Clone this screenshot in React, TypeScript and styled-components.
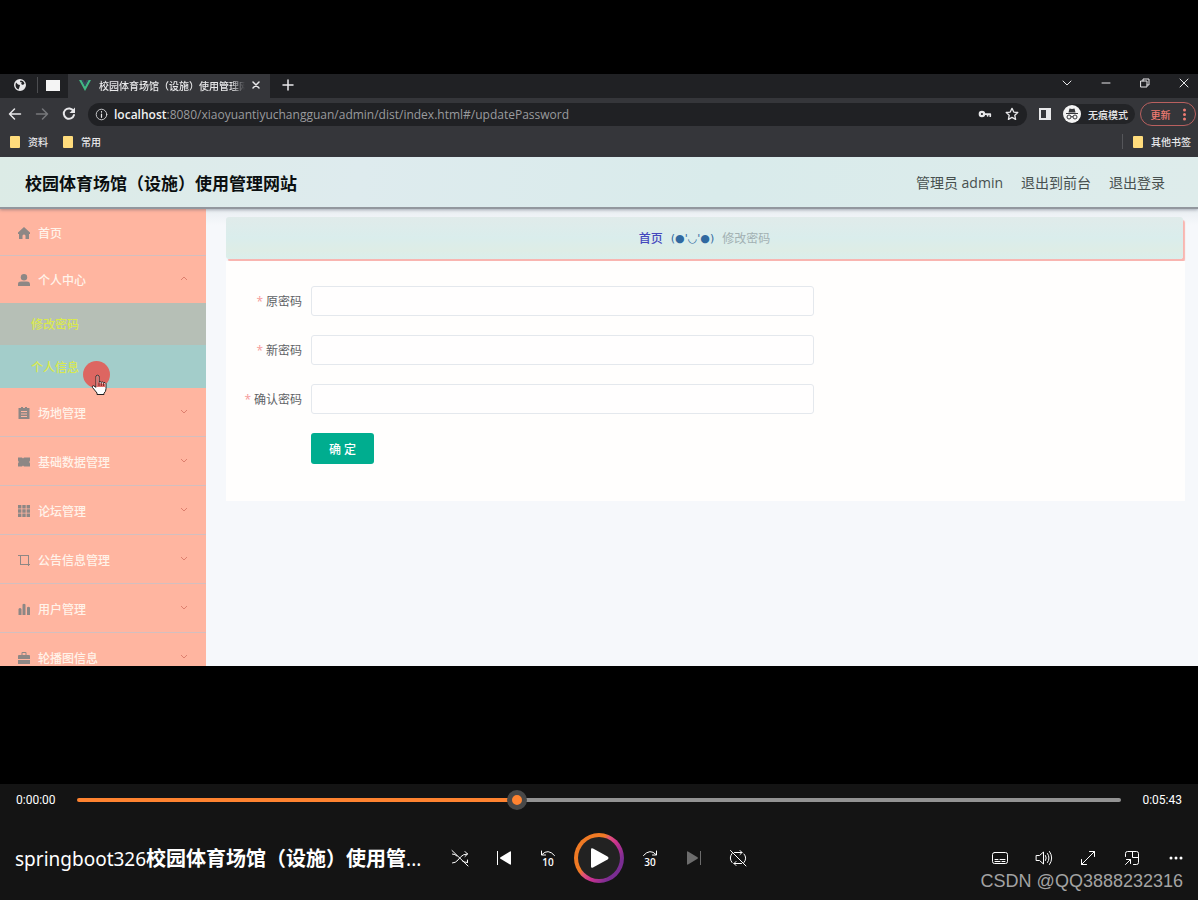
import React, { useState } from "react";
import styled, { createGlobalStyle, css } from "styled-components";

const GlobalStyle = createGlobalStyle`
  *, *::before, *::after { box-sizing: border-box; }
  body { margin: 0; background: #000; }
  button, input { font: inherit; }
  ul { margin: 0; padding: 0; list-style: none; }
`;

const uiFont = `"Open Sans", "Noto Sans CJK SC", sans-serif`;

const Page = styled.div`
  position: relative;
  display: flex;
  flex-direction: column;
  height: 100vh;
  background: #000;
  font-family: ${uiFont};
`;

const plainButton = css`
  display: flex;
  align-items: center;
  justify-content: center;
  padding: 0;
  border: 0;
  background: none;
  color: inherit;
`;

/* ---------- recorded browser window ---------- */

const Video = styled.section`
  display: flex;
  flex-direction: column;
  flex: 1;
  min-height: 0;
  margin: 74px 0 118px;
  overflow: hidden;
  background: #f6f9fb;
`;

const TabStrip = styled.div`
  display: flex;
  align-items: stretch;
  height: 24px;
  flex: none;
  background: #202124;
  color: #e8e8ea;
`;

const PinnedTabs = styled.div`
  display: flex;
  align-items: center;
  width: 68px;
  padding: 0 8px 2px 14px;
`;

const PinDivider = styled.span`
  width: 1px;
  height: 16px;
  margin: 0 8px 0 11px;
  background: #4c4d50;
`;

const WhiteTile = styled.span`
  width: 14px;
  height: 11px;
  background: #f4f4f4;
`;

const Tab = styled.div`
  display: flex;
  align-items: center;
  width: 202px;
  padding: 0 9px 2px 11px;
  background: #35363a;
  font-size: 10px;
  font-weight: 500;
`;

const TabTitle = styled.span`
  flex: 1;
  margin: 0 6px 0 8px;
  overflow: hidden;
  white-space: nowrap;
  mask-image: linear-gradient(90deg, #000 90%, transparent);
`;

const IconButton = styled.button<{ $w?: number }>`
  ${plainButton}
  width: ${(p) => p.$w ?? 16}px;
  height: 16px;
`;

const NewTab = styled(IconButton)`
  margin: 3px 0 0 10px;
`;

const WindowButtons = styled.div`
  display: flex;
  align-items: center;
  gap: 23px;
  height: 18px;
  margin-left: auto;
  padding-right: 6px;
`;

const Toolbar = styled.div`
  display: flex;
  align-items: center;
  height: 32px;
  flex: none;
  padding: 0 2px 0 7px;
  background: #35363a;
  color: #e8e8ea;
`;

const NavButtons = styled.div`
  display: flex;
  gap: 11px;
  margin-right: 11px;
`;

const AddressBar = styled.div`
  display: flex;
  align-items: center;
  flex: 1;
  height: 23px;
  padding: 0 7px;
  border-radius: 12px;
  background: #202124;
`;

const Address = styled.span`
  flex: 1;
  margin-left: 6px;
  color: #9a9b9e;
  font-size: 12px;
  white-space: nowrap;
  strong { color: #f1f1f1; font-weight: 600; }
`;

const AddressActions = styled.div`
  display: flex;
  gap: 11px;
`;

const SidePanelButton = styled(IconButton)`
  margin-left: 10px;
`;

const Incognito = styled.div`
  display: flex;
  align-items: center;
  gap: 7px;
  height: 20px;
  margin: 0 5px 0 10px;
  padding-right: 7px;
  border-radius: 10px;
  background: #232427;
  font-size: 10px;
  font-weight: 500;
`;

const UpdateButton = styled.button`
  ${plainButton}
  gap: 12px;
  width: 56px;
  height: 24px;
  border: 1px solid #b9605f;
  border-radius: 12px;
  color: #f07b72;
  font-size: 10px;
  font-weight: 500;
`;

const Bookmarks = styled.nav`
  display: flex;
  align-items: center;
  gap: 15px;
  height: 27px;
  flex: none;
  padding: 0 7px 4px 10px;
  background: #35363a;
`;

const Bookmark = styled.a<{ $last?: boolean }>`
  display: flex;
  align-items: center;
  gap: 8px;
  color: #e8e8ea;
  font-size: 10px;
  font-weight: 500;
  text-decoration: none;
  ${(p) => p.$last && css`
    margin-left: auto;
    padding-left: 10px;
    border-left: 1px solid #55565a;
  `}
`;

const Folder = styled.span`
  width: 10px;
  height: 12px;
  border-radius: 1px;
  background: #ffdc7c;
`;

/* ---------- admin site ---------- */

const SiteHeader = styled.header`
  position: relative;
  z-index: 1;
  display: flex;
  align-items: center;
  justify-content: space-between;
  height: 52px;
  flex: none;
  padding: 0 33px 0 25px;
  border-bottom: 2px solid #92979e;
  background: linear-gradient(100deg, #dcebe6, #deebee 30%, #d9ebeb 60%, #deeceb);
  box-shadow: 0 1px 3px rgba(60, 70, 90, 0.4);
`;

const SiteTitle = styled.h1`
  margin: 0;
  color: #0b0f10;
  font-size: 17px;
  font-weight: 700;
`;

const SiteLinks = styled.nav`
  display: flex;
  gap: 18px;
  color: #47504f;
  font-size: 14px;
  a { color: inherit; text-decoration: none; }
`;

const SiteBody = styled.div`
  display: flex;
  flex: 1;
  min-height: 0;
`;

const Sidebar = styled.aside`
  position: relative;
  width: 206px;
  flex: none;
  overflow: hidden;
  background: #ffb5a0;
  font-size: 12px;
  font-weight: 500;
`;

const MenuRow = styled.li<{ $short?: boolean; $open?: boolean }>`
  display: flex;
  align-items: center;
  height: ${(p) => (p.$short ? 47 : 49)}px;
  padding: 2px 18px 0 18px;
  border-bottom: 1px solid ${(p) => (p.$open ? "transparent" : "#d3bfbf")};
  color: #8d8785;
`;

const MenuLink = styled.a`
  flex: 1;
  margin-left: 8px;
  color: #fff3ea;
  text-decoration: none;
`;

const SubRow = styled.li<{ $hover?: boolean }>`
  display: flex;
  align-items: center;
  height: ${(p) => (p.$hover ? 43 : 42)}px;
  padding-left: 31px;
  background: ${(p) => (p.$hover ? "#a3cdca" : "#b6bfb6")};
  a { color: #d9e94f; text-decoration: none; }
`;

const Pointer = styled.div`
  position: absolute;
  top: 152px;
  left: 83px;
  width: 27px;
  height: 36px;
`;

const Main = styled.main`
  flex: 1;
  min-width: 0;
  padding: 8px 13px 0 20px;
  background: linear-gradient(#e9eef2, #f6f8fb 16px);
`;

const Breadcrumb = styled.nav`
  display: flex;
  align-items: center;
  justify-content: center;
  gap: 8px;
  height: 42px;
  margin-right: 2px;
  border-radius: 3px;
  background: linear-gradient(#e0ebea, #daedec 50%, #deede6 80%, #daeeeb);
  box-shadow: 2px 3px 1px #f9b5b0;
  font-size: 12px;
  a { color: #4547bd; font-weight: 500; text-decoration: none; }
`;

const Face = styled.span`
  color: #3069a0;
  font-family: "DejaVu Sans", sans-serif;
  font-size: 11px;
`;

const Current = styled.span`
  color: #a2b0b2;
`;

const FormCard = styled.form`
  display: flex;
  flex-direction: column;
  gap: 19px;
  margin-top: 2px;
  padding: 25px 20px 37px 0;
  background: #fffefd;
`;

const Field = styled.div`
  display: flex;
  align-items: center;
`;

const Label = styled.label`
  width: 85px;
  flex: none;
  padding-right: 9px;
  color: #606266;
  font-size: 12px;
  text-align: right;
  white-space: nowrap;
  &::before { content: "*"; margin-right: 3px; color: #f59a9a; }
`;

const TextInput = styled.input`
  flex: 0 1 503px;
  min-width: 0;
  height: 30px;
  padding: 0 12px;
  border: 1px solid #e4e8ed;
  border-radius: 3px;
  background: #fffefe;
`;

const Submit = styled.button`
  ${plainButton}
  width: 63px;
  height: 31px;
  margin-left: 85px;
  border-radius: 3px;
  background: #00ad8f;
  color: #fff;
  font-size: 12px;
  font-weight: 500;
`;

/* ---------- player ---------- */

const Player = styled.footer`
  flex: none;
  background: #141414;
  color: #fff;
`;

const Timeline = styled.div`
  display: flex;
  align-items: center;
  height: 32px;
  padding: 0 16px;
  font-family: Roboto, sans-serif;
  font-size: 12px;
`;

const Time = styled.span<{ $end?: boolean }>`
  width: 61px;
  flex: none;
  text-align: ${(p) => (p.$end ? "right" : "left")};
`;

const Seek = styled.input`
  flex: 1;
  min-width: 0;
  height: 20px;
  margin: 0;
  appearance: none;
  background: none;
  &::-webkit-slider-runnable-track {
    height: 4px;
    border-radius: 2px;
    background: linear-gradient(90deg, #ff8330 var(--played), #939393 var(--played));
  }
  &::-webkit-slider-thumb {
    appearance: none;
    width: 20px;
    height: 20px;
    margin-top: -8px;
    border: 5px solid #484848;
    border-radius: 50%;
    background: #ff8330;
  }
`;

const Controls = styled.div`
  display: grid;
  grid-template-columns: minmax(0, 1fr) auto minmax(0, 1fr);
  align-items: center;
  height: 84px;
  padding: 0 4px;
`;

const MediaTitle = styled.h2`
  margin: 0;
  padding: 0 0 2px 11px;
  overflow: hidden;
  font-family: "Noto Sans", "Noto Sans CJK SC", sans-serif;
  font-size: 19px;
  font-weight: 400;
  white-space: nowrap;
  b { font-size: 20px; font-weight: 700; }
`;

const ButtonGroup = styled.div<{ $end?: boolean }>`
  display: flex;
  align-items: center;
  gap: 8px;
  justify-content: ${(p) => (p.$end ? "flex-end" : "center")};
`;

const ControlButton = styled.button<{ $dim?: boolean }>`
  ${plainButton}
  width: 36px;
  height: 36px;
  color: ${(p) => (p.$dim ? "#6c6c6c" : "#fff")};
`;

const SkipButton = styled(ControlButton)`
  flex-direction: column;
`;

const SkipLabel = styled.span`
  font-family: "Open Sans", sans-serif;
  font-size: 10px;
  font-weight: 600;
  line-height: 10px;
`;

const PlayButton = styled.button`
  ${plainButton}
  width: 50px;
  height: 50px;
  border: 4px solid transparent;
  border-radius: 50%;
  background:
    linear-gradient(#222, #222) padding-box,
    linear-gradient(125deg, #f07a24 38%, #e0527a 46%, #c9318f 58%, #7a2d92 78%) border-box;
`;

const Watermark = styled.div`
  position: absolute;
  right: 15px;
  bottom: 8px;
  color: #a3a3a3;
  font-family: "Liberation Sans", sans-serif;
  font-size: 18px;
  line-height: 22px;
`;

/* ---------- drawings ---------- */

type IconProps = { size?: number; box?: number; fill?: boolean; width?: number; children: React.ReactNode };

const Icon = ({ size = 16, box = 16, fill, width = 1, children }: IconProps) => (
  <svg
    width={size}
    height={size}
    viewBox={`0 0 ${box} ${box}`}
    fill={fill ? "currentColor" : "none"}
    stroke={fill ? "none" : "currentColor"}
    strokeWidth={width}
    strokeLinecap="round"
    strokeLinejoin="round"
    aria-hidden="true"
  >
    {children}
  </svg>
);

const Chevron = ({ up }: { up?: boolean }) => (
  <svg width="8" height="8" viewBox="0 0 8 8" fill="none" stroke="#dd7f6e" aria-hidden="true">
    <path d={up ? "M1 4l3-3 3 3" : "M1 1l3 3 3-3"} />
  </svg>
);

const SkipArc = ({ back }: { back?: boolean }) => (
  <svg width="16" height="7" viewBox="0 0 16 7" fill="none" stroke="currentColor" strokeLinecap="round" aria-hidden="true">
    {back ? <path d="M1.500 1v4h4M2 4.500Q8-2 14.500 5.500" /> : <path d="M14.500 1v4h-4M14 4.500Q8-2 1.500 5.500" />}
  </svg>
);

const menuIcons: Record<string, React.ReactNode> = {
  home: <path d="M6 0L0 5.500V7h1v5h3.500V8.500Q6 6.500 7.500 8.500V12H11V7h1V5.500z" />,
  user: (
    <>
      <circle cx="6" cy="3.200" r="3.200" />
      <path d="M0 12V9.800Q.2 7.500 3 7.500h6q2.800 0 3 2.300V12z" />
    </>
  ),
  list: <path fillRule="evenodd" d="M.5 1H3V0h2v1h2V0h2v1h2.500v11H.5zM3 4v1h6V4zm0 2.500v1h6v-1zM3 9v1h6V9z" />,
  ticket: <path d="M0 1.500h4l1 1 1-1h6v3Q10.500 6 12 7.500v3H6l-1-1-1 1H0v-3Q1.500 6 0 4.500z" />,
  grid: <path d="M0 0h3.400v3.400H0zM4.300 0h3.400v3.400H4.300zM8.600 0H12v3.400H8.600zM0 4.300h3.400v3.400H0zM4.300 4.300h3.400v3.400H4.300zM8.600 4.300H12v3.400H8.600zM0 8.600h3.400V12H0zM4.300 8.600h3.400V12H4.300zM8.600 8.600H12V12H8.600z" />,
  crop: <path d="M0 1h11v9h1v1h-1v1h-1v-1H2V2H0zm3 1v8h7V2z" fillRule="evenodd" />,
  bars: <path d="M.5 6Q2 4 3.500 6v6h-3zM4.500 1.500Q6 0 7.500 1.500V12h-3zM9 4.500Q10.300 3 12 4.500V12H9z" />,
  bag: <path fillRule="evenodd" d="M3.500 3V1q0-1 1-1h3q1 0 1 1v2H11q1 0 1 1v3H0V4q0-1 1-1zm1 0h3V1h-3zM0 8h12v4H0z" />,
};

const MenuIcon = ({ name }: { name: string }) => (
  <Icon size={12} box={12} fill>{menuIcons[name]}</Icon>
);

const menu = [
  ["list", "场地管理"],
  ["ticket", "基础数据管理"],
  ["grid", "论坛管理"],
  ["crop", "公告信息管理"],
  ["bars", "用户管理"],
  ["bag", "轮播图信息"],
];

const fields = [
  ["old", "原密码"],
  ["new", "新密码"],
  ["confirm", "确认密码"],
];

const BrowserChrome = () => (
  <>
    <TabStrip>
      <PinnedTabs>
        <Icon size={12} box={12} fill>
          <path fillRule="evenodd" d="M6 0a6 6 0 100 12A6 6 0 006 0zM2 3.500l2 2 2 .5-.5 2-1 2.500Q1.500 9 1.500 6zM6.500 1.500q3 0 4 3L9 6 7 5l1-1.500-2-.5z" />
        </Icon>
        <PinDivider />
        <WhiteTile />
      </PinnedTabs>
      <Tab>
        <svg width="12" height="11" viewBox="0 0 12 11" aria-hidden="true">
          <path d="M0 0h2.500L6 6.500 9.500 0H12L6 11z" fill="#41b883" />
          <path d="M2.500 0h2L6 3l1.500-3h2L6 6.500z" fill="#35495e" />
        </svg>
        <TabTitle>校园体育场馆（设施）使用管理网</TabTitle>
        <IconButton $w={10} aria-label="关闭标签页">
          <Icon size={8} box={8} width={1.5}><path d="M1 1l6 6M7 1L1 7" /></Icon>
        </IconButton>
      </Tab>
      <NewTab aria-label="新标签页">
        <Icon size={12} box={12}><path d="M6 1v10M1 6h10" strokeWidth="1.500" /></Icon>
      </NewTab>
      <WindowButtons>
        <IconButton aria-label="搜索标签页"><Icon size={10} box={10}><path d="M1 3l4 4 4-4" /></Icon></IconButton>
        <IconButton aria-label="最小化"><Icon size={10} box={10}><path d="M1 5h8" /></Icon></IconButton>
        <IconButton aria-label="还原">
          <Icon size={10} box={10}><path d="M1 3h6v6H1zM3 3V1h6v6H7" /></Icon>
        </IconButton>
        <IconButton aria-label="关闭"><Icon size={10} box={10}><path d="M1 1l8 8M9 1L1 9" /></Icon></IconButton>
      </WindowButtons>
    </TabStrip>
    <Toolbar>
      <NavButtons>
        <IconButton aria-label="后退"><Icon width={1.5}><path d="M13.500 8H2.500m5-5l-5 5 5 5" /></Icon></IconButton>
        <IconButton aria-label="前进">
          <Icon width={1.5}><path d="M2.500 8h11M8.500 3l5 5-5 5" stroke="#77787b" /></Icon>
        </IconButton>
        <IconButton aria-label="重新加载">
          <Icon width={2}><path d="M12.500 5A5.200 5.200 0 1013 9" /><path d="M14 1.500V7H8.500z" fill="currentColor" strokeWidth="0" /></Icon>
        </IconButton>
      </NavButtons>
      <AddressBar>
        <Icon size={13}><circle cx="8" cy="8" r="6.500" /><path d="M8 7.500v4M8 4.500v.5" strokeWidth="1.500" /></Icon>
        <Address><strong>localhost</strong>:8080/xiaoyuantiyuchangguan/admin/dist/index.html#/updatePassword</Address>
        <AddressActions>
          <IconButton aria-label="密码">
            <Icon size={14}><circle cx="4.500" cy="8" r="2.500" strokeWidth="2.500" /><path d="M7.500 8H14v2.500M11 8v2" strokeWidth="2" /></Icon>
          </IconButton>
          <IconButton aria-label="收藏">
            <Icon size={14} width={1.5}><path d="M8 1.500l2 4.300 4.600.5-3.400 3.200.9 4.700L8 11.900l-4.100 2.300.9-4.700L1.400 6.300 6 5.800z" /></Icon>
          </IconButton>
        </AddressActions>
      </AddressBar>
      <SidePanelButton aria-label="侧边栏">
        <Icon size={12} box={12} fill><path fillRule="evenodd" d="M0 0h12v12H0zM2 2v8h5V2z" /></Icon>
      </SidePanelButton>
      <Incognito>
        <svg width="18" height="18" viewBox="0 0 18 18" aria-hidden="true">
          <circle cx="9" cy="9" r="9" fill="#f5f5f5" />
          <path d="M5.500 7.500l1-4 2.500.5 2.500-.5 1 4zM3 8h12v1H3z" fill="#35363a" />
          <g fill="none" stroke="#35363a"><circle cx="6" cy="12" r="2" /><circle cx="12" cy="12" r="2" /><path d="M8 12q1-1 2 0" /></g>
        </svg>
        无痕模式
      </Incognito>
      <UpdateButton>
        更新
        <svg width="3" height="13" viewBox="0 0 3 13" fill="currentColor" aria-hidden="true">
          <circle cx="1.500" cy="2" r="1.500" /><circle cx="1.500" cy="6.500" r="1.500" /><circle cx="1.500" cy="11" r="1.500" />
        </svg>
      </UpdateButton>
    </Toolbar>
    <Bookmarks>
      <Bookmark href="#"><Folder />资料</Bookmark>
      <Bookmark href="#"><Folder />常用</Bookmark>
      <Bookmark href="#" $last><Folder />其他书签</Bookmark>
    </Bookmarks>
  </>
);

const AdminSite = () => (
  <>
    <SiteHeader>
      <SiteTitle>校园体育场馆（设施）使用管理网站</SiteTitle>
      <SiteLinks>
        <span>管理员 admin</span>
        <a href="#front">退出到前台</a>
        <a href="#logout">退出登录</a>
      </SiteLinks>
    </SiteHeader>
    <SiteBody>
      <Sidebar>
        <ul>
          <MenuRow $short><MenuIcon name="home" /><MenuLink href="#home">首页</MenuLink></MenuRow>
          <MenuRow $short $open>
            <MenuIcon name="user" /><MenuLink href="#me">个人中心</MenuLink><Chevron up />
          </MenuRow>
          <SubRow><a href="#password">修改密码</a></SubRow>
          <SubRow $hover><a href="#profile">个人信息</a></SubRow>
          {menu.map(([icon, text]) => (
            <MenuRow key={text}>
              <MenuIcon name={icon} /><MenuLink href="#menu">{text}</MenuLink><Chevron />
            </MenuRow>
          ))}
        </ul>
        <Pointer>
          <svg width="27" height="36" viewBox="0 0 27 36" aria-hidden="true">
            <circle cx="13.500" cy="13.500" r="13.500" fill="#dd6661" />
            <path
              d="M13 15q1.500-1.500 3 0v6q1-1 2.300.3 1.200-.9 2.200.4 1.800-.7 2.500 1v5q0 3-2 4.500v1.300h-7V32l-4.500-5.500q-.8-1.800 1-1.800l2.500 1.600z"
              fill="#fff"
              stroke="#222"
            />
            <path d="M13.500 15.500q1-1 2 0v6.500l7 1v3h-9z" fill="#e3716c" />
            <path d="M16 21v4M18.300 21.500V25M20.600 22v3" stroke="#7c2324" />
          </svg>
        </Pointer>
      </Sidebar>
      <Main>
        <Breadcrumb>
          <a href="#home">首页</a>
          <Face>(●'◡'●)</Face>
          <Current>修改密码</Current>
        </Breadcrumb>
        <FormCard onSubmit={(e) => e.preventDefault()}>
          {fields.map(([id, text]) => (
            <Field key={id}>
              <Label htmlFor={id}>{text}</Label>
              <TextInput id={id} type="password" />
            </Field>
          ))}
          <Submit type="submit">确 定</Submit>
        </FormCard>
      </Main>
    </SiteBody>
  </>
);

export default function App() {
  const [position, setPosition] = useState(42);
  return (
    <Page>
      <GlobalStyle />
      <Video>
        <BrowserChrome />
        <AdminSite />
      </Video>
      <Player>
        <Timeline>
          <Time>0:00:00</Time>
          <Seek
            type="range"
            aria-label="播放进度"
            value={position}
            onChange={(e) => setPosition(Number(e.target.value))}
            style={{ "--played": `${position}%` } as React.CSSProperties}
          />
          <Time $end>0:05:43</Time>
        </Timeline>
        <Controls>
          <MediaTitle>springboot326<b>校园体育场馆（设施）使用管</b>...</MediaTitle>
          <ButtonGroup>
            <ControlButton aria-label="随机播放">
              <Icon size={18} box={18}>
                <path d="M1.500 14q3 0 5.500-3l2.500-3q2.500-3 7-3M14 2.500L16.500 5 14 7.500M1.500 5Q4 5 6 7M11.500 12q2 1.500 5 1.500M16.500 11v2.500M1 1.500L17 17" />
              </Icon>
            </ControlButton>
            <ControlButton aria-label="上一个">
              <Icon size={16} fill><path d="M1 1h1v14H1zM14 1.500q1-.5 1 .5v12q0 1-1 .5L4.500 8.800q-1-.8 0-1.600z" /></Icon>
            </ControlButton>
            <SkipButton aria-label="后退 10 秒"><SkipArc back /><SkipLabel>10</SkipLabel></SkipButton>
            <PlayButton aria-label="播放">
              <Icon size={22} box={22} fill><path d="M3 2.500Q3 .5 5 1.500l14.500 8q2 1.500 0 3L5 20.500q-2 1-2-1z" /></Icon>
            </PlayButton>
            <SkipButton aria-label="前进 30 秒"><SkipArc /><SkipLabel>30</SkipLabel></SkipButton>
            <ControlButton $dim aria-label="下一个">
              <Icon size={16} fill><path d="M14 1h1v14h-1zM2 1.500q-1-.5-1 .5v12q0 1 1 .5l9.500-5.700q1-.8 0-1.600z" /></Icon>
            </ControlButton>
            <ControlButton aria-label="循环播放">
              <Icon size={18} box={18}>
                <path d="M5.500 3.500H13M11 1.500l2 2-2 2M15 5q3.500 4 0 8.500M12.500 14.500H5M7 12.500l-2 2 2 2M3 4.500q-3.500 4.500 0 9M1.500 1.500L17 17" />
              </Icon>
            </ControlButton>
          </ButtonGroup>
          <ButtonGroup $end>
            <ControlButton aria-label="字幕">
              <Icon size={18} box={18}><rect x="1.500" y="3.500" width="15" height="11" rx="2" /><path d="M4 10.500h3M9 10.500h5M4 12.500h5M11 12.500h3" /></Icon>
            </ControlButton>
            <ControlButton aria-label="音量">
              <Icon size={18} box={18}><path d="M1.500 6.500h3L8.500 3v12l-4-3.500h-3zM10.500 6.500q1.500 2.500 0 5M12.500 4.500q3 4.500 0 9M14.500 2.500q4.500 6.500 0 13" /></Icon>
            </ControlButton>
            <ControlButton aria-label="全屏">
              <Icon size={18} box={18}><path d="M2.500 15.500l13-13M10.500 2.500h5v5M2.500 10.500v5h5" /></Icon>
            </ControlButton>
            <ControlButton aria-label="迷你播放器">
              <Icon size={18} box={18}><path d="M2.500 7.500v-3q0-2 2-2h9q2 0 2 2v9q0 2-2 2h-3M9.500 2.500v6h6M2.500 15.500l5-5M3.500 10.500h4v4" /></Icon>
            </ControlButton>
            <ControlButton aria-label="更多">
              <Icon size={16} fill><circle cx="3" cy="8" r="1.500" /><circle cx="8" cy="8" r="1.500" /><circle cx="13" cy="8" r="1.500" /></Icon>
            </ControlButton>
          </ButtonGroup>
        </Controls>
      </Player>
      <Watermark>CSDN @QQ3888232316</Watermark>
    </Page>
  );
}
